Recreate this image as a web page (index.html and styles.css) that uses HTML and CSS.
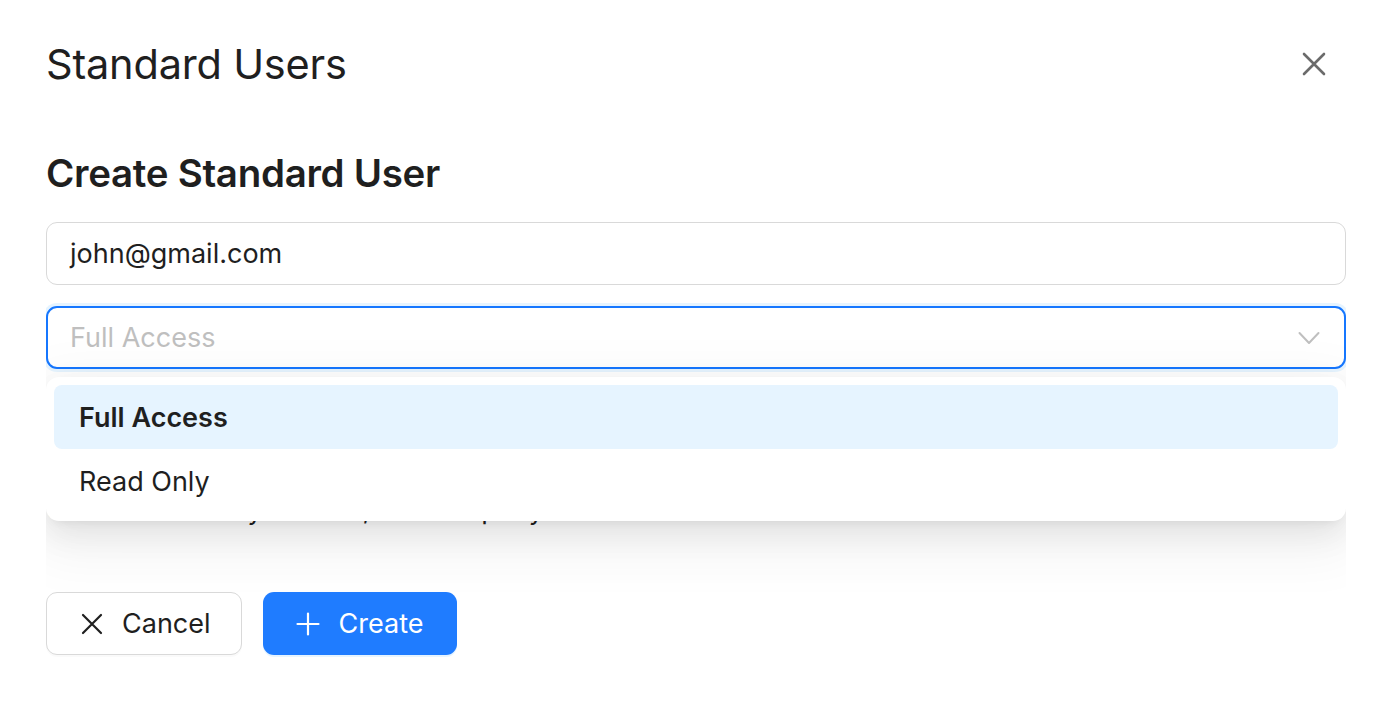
FILE: index.html
```html
<!DOCTYPE html>
<html lang="en">
<head>
<meta charset="utf-8">
<title>Standard Users</title>
<link rel="stylesheet" href="styles.css">
</head>
<body>
<div class="modal">
  <header class="modal-header">
    <h1 class="modal-title">Standard Users</h1>
    <button class="close-btn" aria-label="Close">
      <svg width="24" height="24" viewBox="0 0 24 24"><path d="M2 2 L22 22 M22 2 L2 22" stroke="#6b6b6b" stroke-width="2.6" stroke-linecap="round" fill="none"/></svg>
    </button>
  </header>

  <h2 class="form-title">Create Standard User</h2>

  <div class="form-area">
    <div class="input">john@gmail.com</div>

    <div class="select-wrap">
      <div class="select focused">
        <span class="placeholder">Full Access</span>
        <svg class="chevron" width="22" height="14" viewBox="0 0 22 14"><path d="M1.5 2 L11 12 L20.5 2" stroke="#bfbfbf" stroke-width="2" fill="none" stroke-linecap="round" stroke-linejoin="round"/></svg>
      </div>
      <p class="hint">Can be edited by admins, the company owner and the team leads.</p>

      <ul class="dropdown">
        <li class="option active">Full Access</li>
        <li class="option">Read Only</li>
      </ul>
    </div>
  </div>

  <div class="actions">
    <button class="btn btn-default">
      <svg width="22" height="22" viewBox="0 0 22 22"><path d="M2 2 L20 20 M20 2 L2 20" stroke="#1f1f1f" stroke-width="2.2" stroke-linecap="round" fill="none"/></svg>
      <span>Cancel</span>
    </button>
    <button class="btn btn-primary">
      <svg width="24" height="24" viewBox="0 0 24 24"><path d="M12 1.5 V22.5 M1.5 12 H22.5" stroke="#ffffff" stroke-width="2.2" stroke-linecap="round" fill="none"/></svg>
      <span>Create</span>
    </button>
  </div>
</div>
</body>
</html>
```

FILE: styles.css
```css
* { box-sizing: border-box; }

html, body {
  margin: 0;
  padding: 0;
  background: #ffffff;
}

body {
  font-family: "Inter", "Roboto", "Liberation Sans", sans-serif;
  color: #1f1f1f;
}

.modal {
  width: 1392px;
  height: 704px;
  padding: 36px 46px 0 46px;
  overflow: hidden;
}

.modal-header {
  display: flex;
  justify-content: space-between;
  align-items: center;
  height: 56px;
}

.modal-title {
  margin: 0;
  font-weight: 400;
  font-size: 41.5px;
  letter-spacing: -0.2px;
  color: #1f1f1f;
  line-height: 56px;
}

.close-btn {
  border: 0;
  background: transparent;
  padding: 0;
  margin-right: 20px;
  margin-top: 0;
  width: 24px;
  height: 24px;
  display: flex;
  align-items: center;
  justify-content: center;
  cursor: pointer;
}

.form-title {
  margin: 57px 0 0 0;
  font-size: 38.5px;
  font-weight: 600;
  line-height: 48px;
  letter-spacing: -0.3px;
  color: #1f1f1f;
}

.form-area {
  margin-top: 25px;
  overflow: hidden;
  height: 370px;
}

.input {
  height: 63px;
  border: 1.5px solid #d9d9d9;
  border-radius: 11px;
  padding: 0 23px;
  display: flex;
  align-items: center;
  font-size: 27px;
  color: #1f1f1f;
}

.select-wrap {
  position: relative;
  margin-top: 21px;
}

.select {
  height: 63px;
  border: 2px solid #1677ff;
  border-radius: 11px;
  padding: 0 22px;
  display: flex;
  align-items: center;
  justify-content: space-between;
  background: #ffffff;
  box-shadow: 0 0 0 3px rgba(5, 145, 255, 0.1);
  font-size: 27px;
}

.placeholder {
  color: #bfbfbf;
}

.chevron {
  margin-right: 2px;
}

.hint {
  margin: 123px 0 0 0;
  font-size: 27px;
  line-height: 36px;
  color: #1f1f1f;
}

.dropdown {
  position: absolute;
  top: 71px;
  left: 0;
  right: 0;
  margin: 0;
  padding: 8px;
  list-style: none;
  background: #ffffff;
  border-radius: 13px;
  box-shadow: 0 12px 32px 0 rgba(0, 0, 0, 0.08),
              0 6px 12px -8px rgba(0, 0, 0, 0.12),
              0 18px 56px 16px rgba(0, 0, 0, 0.05);
}

.option {
  height: 64px;
  display: flex;
  align-items: center;
  padding: 0 25px;
  font-size: 27px;
  border-radius: 8px;
  color: #1f1f1f;
}

.option.active {
  background: #e6f4ff;
  font-weight: 600;
}

.actions {
  display: flex;
  gap: 21px;
  margin-top: 0;
}

.btn {
  height: 63px;
  border-radius: 11px;
  display: flex;
  align-items: center;
  gap: 19px;
  font-family: inherit;
  font-size: 27px;
  cursor: pointer;
}

.btn-default {
  background: #ffffff;
  border: 1.5px solid #d9d9d9;
  color: #1f1f1f;
  padding: 0 30px 0 34px;
  box-shadow: 0 2px 0 rgba(0, 0, 0, 0.02);
}

.btn-primary {
  background: #1f7cff;
  border: 0;
  color: #ffffff;
  padding: 0 34px 0 33px;
  box-shadow: 0 2px 0 rgba(5, 145, 255, 0.1);
}
```
